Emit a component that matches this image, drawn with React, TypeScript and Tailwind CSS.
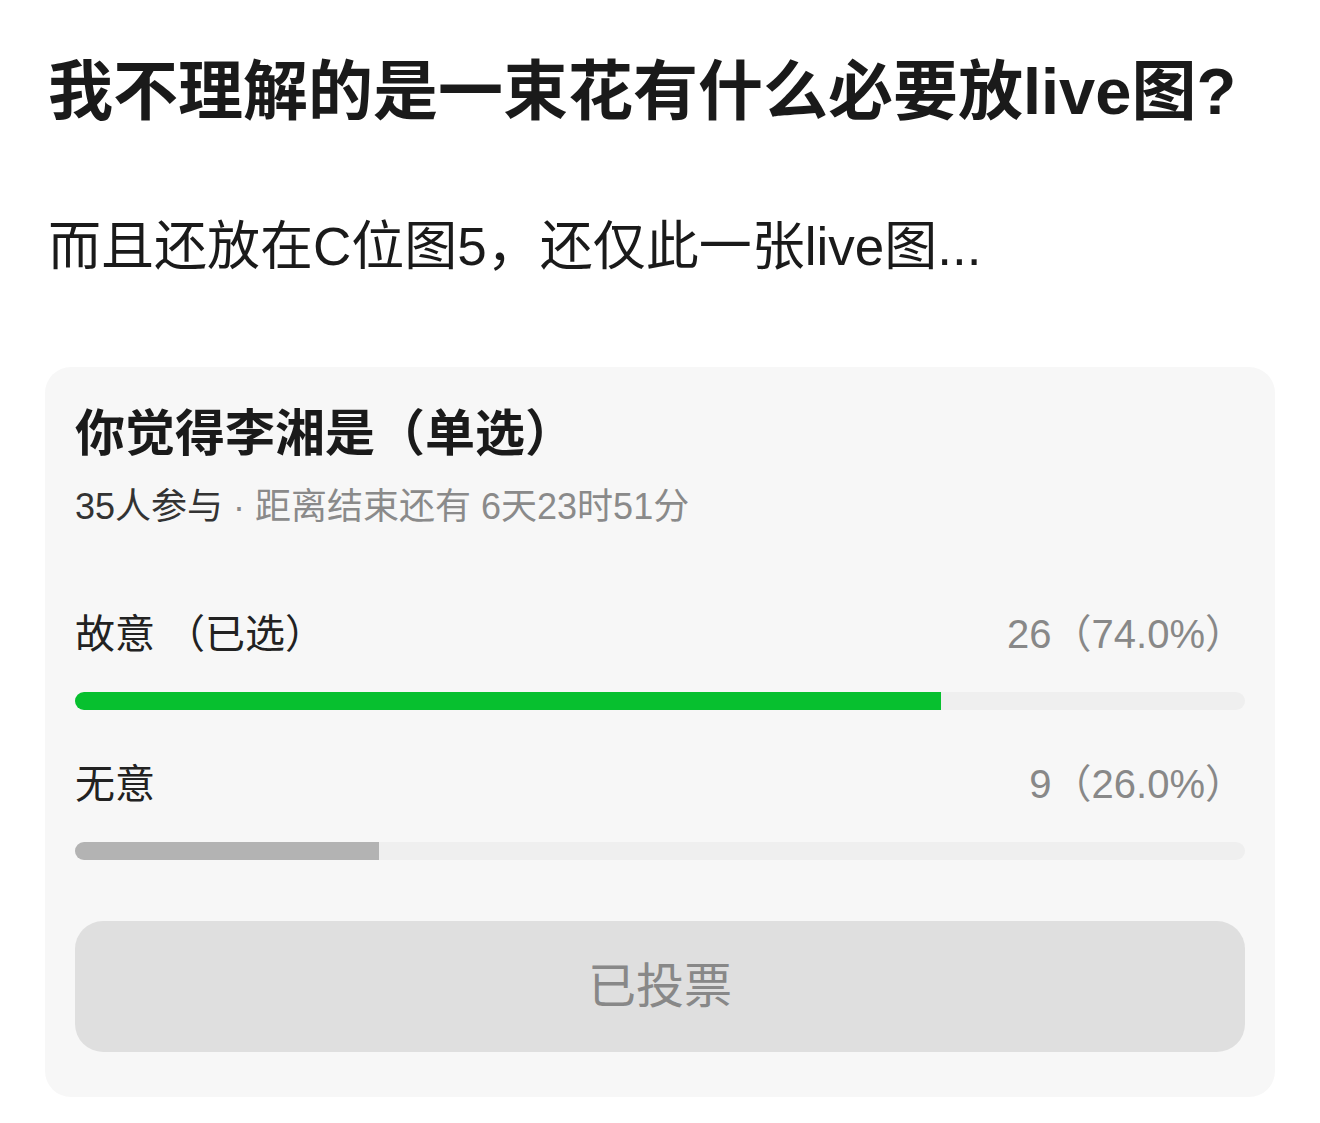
import React from 'react';

interface PollOption {
  id: string;
  label: string;
  picked: boolean;
  votes: number;
  percent: number;
}

const options: PollOption[] = [
  { id: 'guyi', label: '故意', picked: true, votes: 26, percent: 74.0 },
  { id: 'wuyi', label: '无意', picked: false, votes: 9, percent: 26.0 },
];

const font = { fontFamily: '"Liberation Sans", "Noto Sans CJK SC", sans-serif' };

const App: React.FC = () => {
  return (
    <div className="w-[1320px] h-[1123px] bg-white overflow-hidden" style={font}>
      {/* Post text */}
      <div className="pl-[48px] pt-[52px]">
        <h1 className="text-[65px] leading-[80px] font-bold text-[#1a1a1a]">
          我不理解的是一束花有什么必要放live图?
        </h1>
        <p className="mt-[83px] text-[53px] leading-[64px] text-[#1a1a1a]">
          而且还放在C位图5，还仅此一张live图...
        </p>
      </div>

      {/* Poll card */}
      <div className="ml-[45px] mt-[88px] w-[1230px] rounded-[26px] bg-[#f7f7f7] px-[30px] pt-[36px] pb-[45px]">
        <h2 className="text-[50px] leading-[62px] font-bold text-[#1a1a1a]">你觉得李湘是（单选）</h2>
        <div className="mt-[20px] text-[36px] leading-[44px] text-[#8a8a8a]">
          <span className="text-[#333333]">35人参与</span> · 距离结束还有 6天23时51分
        </div>

        <div className="mt-[79px] flex flex-col gap-[48px]">
          {options.map((opt) => (
            <div key={opt.id}>
              <div className="flex items-center justify-between text-[40px] leading-[52px]">
                <span className="text-[#222222]">
                  {opt.label}
                  {opt.picked && <span className="ml-[10px]">（已选）</span>}
                </span>
                <span className="text-[#888888]">
                  {opt.votes}（{opt.percent.toFixed(1)}%）
                </span>
              </div>
              <div className="mt-[32px] h-[18px] rounded-full bg-[#efefef] overflow-hidden">
                <div
                  className={opt.picked ? 'h-full bg-[#07c02f]' : 'h-full bg-[#b3b3b3]'}
                  style={{ width: `${opt.percent}%` }}
                />
              </div>
            </div>
          ))}
        </div>

        <button className="mt-[61px] w-full h-[131px] rounded-[28px] bg-[#dfdfdf] text-[48px] text-[#888888] flex items-center justify-center">
          已投票
        </button>
      </div>
    </div>
  );
};

export default App;
